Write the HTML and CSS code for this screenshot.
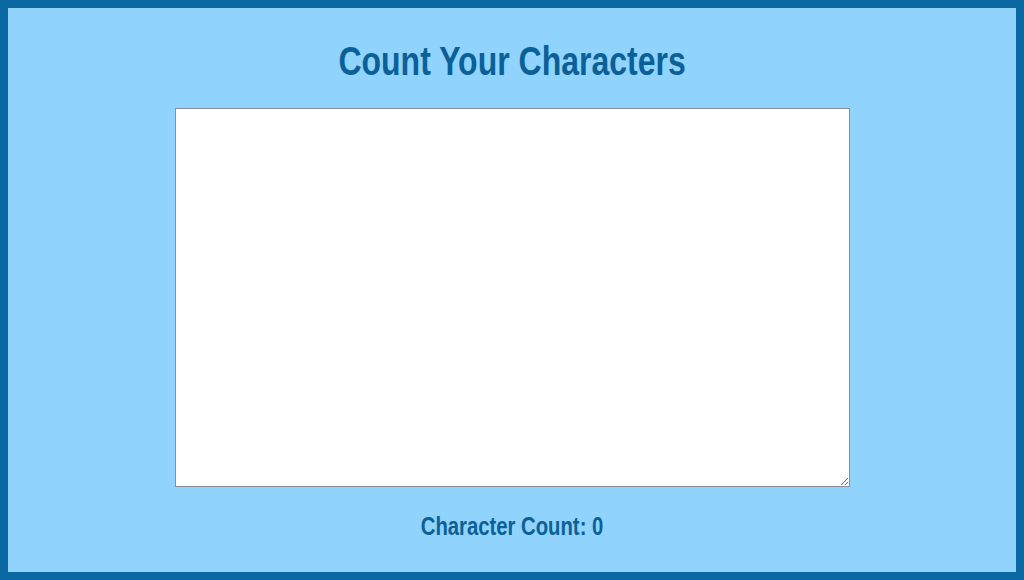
FILE: index.html
```html
<!DOCTYPE html>
<html lang="en">
<head>
<meta charset="utf-8">
<title>Character Counter</title>
<link rel="stylesheet" href="styles.css">
</head>
<body>
<main class="counter">
  <h1 class="counter-title">Count Your Characters</h1>
  <textarea class="counter-input" aria-label="Text to count"></textarea>
  <p class="counter-result">Character Count: <span class="counter-value">0</span></p>
</main>
</body>
</html>
```

FILE: styles.css
```css
html {
  height: 100%;
  background: #0a69a3;
}

body {
  margin: 8px;
  height: calc(100% - 16px);
  background: #90d3fd;
  font-family: "Liberation Sans Narrow", "Arial Narrow", "Liberation Sans", Arial, sans-serif;
  color: #0b6197;
}

.counter {
  display: flex;
  flex-direction: column;
  align-items: center;
  padding-top: 29px;
}

/* narrow headline look: squeeze the bold sans horizontally */
.counter-title {
  margin: 0 0 23px;
  font-size: 40px;
  font-weight: bold;
  line-height: 48px;
  transform: scaleX(0.8);
}

.counter-input {
  box-sizing: border-box;
  width: 675px;
  height: 379px;
  margin: 0;
  border: 1px solid #8a8f93;
  background: #fff;
  resize: both;
}

.counter-result {
  margin: 23px 0 0;
  font-size: 26px;
  font-weight: bold;
  line-height: 32px;
  transform: scaleX(0.78);
}
```
